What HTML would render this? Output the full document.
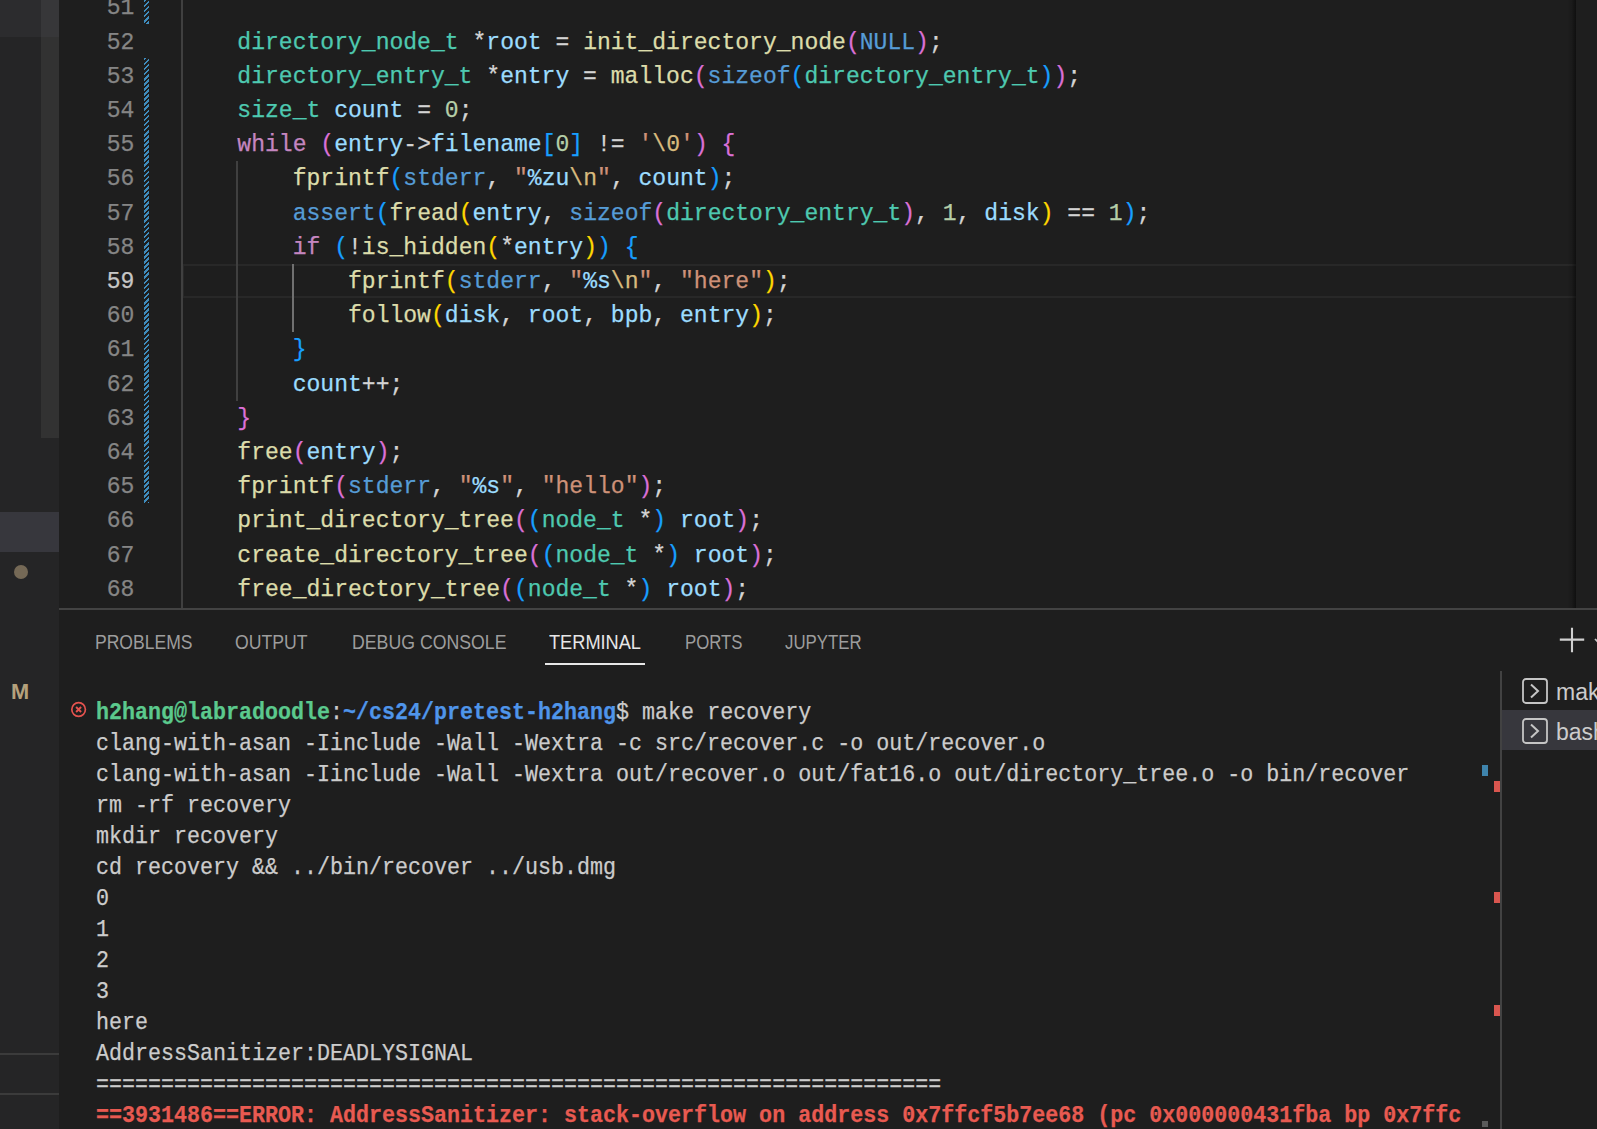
<!DOCTYPE html>
<html><head><meta charset="utf-8"><style>
*{margin:0;padding:0;box-sizing:border-box}
html,body{width:1597px;height:1129px;overflow:hidden;background:#1e1e1e}
body{position:relative;font-family:"Liberation Sans",sans-serif}
.abs{position:absolute}
#sb{position:absolute;left:0;top:0;width:59px;height:1129px;background:#252526;overflow:hidden}
#ed{position:absolute;left:59px;top:0;width:1538px;height:608px;background:#1e1e1e;overflow:hidden}
.cl,.ln{position:absolute;height:34.2px;line-height:34.2px;white-space:pre;font-family:"Liberation Mono",monospace;font-size:23.05px;padding-top:1px;-webkit-text-stroke:0.25px currentColor}
.cl{left:123px;color:#d4d4d4}
.ln{left:0;width:75.4px;text-align:right;color:#858585}
.ln.act{color:#c6c6c6}
.t{color:#4ec9b0} .v{color:#9cdcfe} .f{color:#dcdcaa} .k{color:#569cd6} .c{color:#c586c0}
.n{color:#b5cea8} .s{color:#ce9178} .e{color:#d7ba7d} .p{color:#9cdcfe} .o{color:#d4d4d4}
.b1{color:#ffd700} .b2{color:#da70d6} .b3{color:#179fff}
.hatch{position:absolute;left:85px;width:5px;background:repeating-linear-gradient(135deg,#3f8cbd 0 1.9px,#1e1e1e 1.9px 3.6px)}
#panel{position:absolute;left:59px;top:608px;width:1538px;height:521px;background:#1e1e1e;}
.tab{position:absolute;top:0;font-size:20.2px;line-height:24px;transform-origin:0 0;color:#9d9d9d;letter-spacing:0px;white-space:nowrap}
.tl{position:absolute;left:36.5px;height:31px;line-height:31px;white-space:pre;font-family:"Liberation Mono",monospace;font-size:24px;color:#cccccc;-webkit-text-stroke:0.25px currentColor;transform:scaleX(0.9028);transform-origin:0 0}
.tg{color:#5bc98d;font-weight:bold} .tb{color:#4f95ea;font-weight:bold} .tr{color:#e85a51;font-weight:bold}
</style></head><body>
<div id="sb">
  <div class="abs" style="left:0;top:0;width:59px;height:37px;background:#2c2c2e"></div>
  <div class="abs" style="left:41px;top:0;width:18px;height:438px;background:rgba(121,121,121,0.16)"></div>
  <div class="abs" style="left:0;top:512px;width:59px;height:40px;background:#37373d"></div>
  <div class="abs" style="left:14px;top:564.5px;width:14px;height:14px;border-radius:50%;background:#756956"></div>
  <div class="abs" style="left:11px;top:676.5px;font-size:21.8px;line-height:30px;color:#b5a17c;font-weight:bold">M</div>
  <div class="abs" style="left:0;top:1053px;width:59px;height:2px;background:#3b3b3b"></div>
  <div class="abs" style="left:0;top:1093px;width:59px;height:2px;background:#3b3b3b"></div>
</div>
<div id="ed">
  <div class="abs" style="left:123px;top:263.8px;width:1418px;height:33.8px;border:2px solid #282828;border-right:0"></div>
  <div class="abs" style="left:122px;top:0;width:2px;height:608px;background:#404040"></div>
  <div class="abs" style="left:177px;top:161.4px;width:2px;height:239.4px;background:#404040"></div>
  <div class="abs" style="left:233px;top:264.0px;width:2px;height:68.4px;background:#707070"></div>
  <div class="hatch" style="top:0;height:24px"></div>
  <div class="hatch" style="top:58px;height:445px"></div>
  <div class="ln" style="top:-9.60px">51</div><div class="ln" style="top:24.60px">52</div><div class="ln" style="top:58.80px">53</div><div class="ln" style="top:93.00px">54</div><div class="ln" style="top:127.20px">55</div><div class="ln" style="top:161.40px">56</div><div class="ln" style="top:195.60px">57</div><div class="ln" style="top:229.80px">58</div><div class="ln act" style="top:264.00px">59</div><div class="ln" style="top:298.20px">60</div><div class="ln" style="top:332.40px">61</div><div class="ln" style="top:366.60px">62</div><div class="ln" style="top:400.80px">63</div><div class="ln" style="top:435.00px">64</div><div class="ln" style="top:469.20px">65</div><div class="ln" style="top:503.40px">66</div><div class="ln" style="top:537.60px">67</div><div class="ln" style="top:571.80px">68</div>
  <div class="cl" style="top:-9.60px"></div><div class="cl" style="top:24.60px">    <span class="t">directory_node_t</span><span class="o"> *</span><span class="v">root</span><span class="o"> = </span><span class="f">init_directory_node</span><span class="b2">(</span><span class="k">NULL</span><span class="b2">)</span><span class="o">;</span></div><div class="cl" style="top:58.80px">    <span class="t">directory_entry_t</span><span class="o"> *</span><span class="v">entry</span><span class="o"> = </span><span class="f">malloc</span><span class="b2">(</span><span class="k">sizeof</span><span class="b3">(</span><span class="t">directory_entry_t</span><span class="b3">)</span><span class="b2">)</span><span class="o">;</span></div><div class="cl" style="top:93.00px">    <span class="t">size_t</span><span class="o"> </span><span class="v">count</span><span class="o"> = </span><span class="n">0</span><span class="o">;</span></div><div class="cl" style="top:127.20px">    <span class="c">while</span><span class="o"> </span><span class="b2">(</span><span class="v">entry</span><span class="o">-&gt;</span><span class="v">filename</span><span class="b3">[</span><span class="n">0</span><span class="b3">]</span><span class="o"> != </span><span class="s">&#x27;</span><span class="e">\0</span><span class="s">&#x27;</span><span class="b2">)</span><span class="o"> </span><span class="b2">{</span></div><div class="cl" style="top:161.40px">        <span class="f">fprintf</span><span class="b3">(</span><span class="k">stderr</span><span class="o">, </span><span class="s">&quot;</span><span class="p">%zu</span><span class="e">\n</span><span class="s">&quot;</span><span class="o">, </span><span class="v">count</span><span class="b3">)</span><span class="o">;</span></div><div class="cl" style="top:195.60px">        <span class="k">assert</span><span class="b3">(</span><span class="f">fread</span><span class="b1">(</span><span class="v">entry</span><span class="o">, </span><span class="k">sizeof</span><span class="b2">(</span><span class="t">directory_entry_t</span><span class="b2">)</span><span class="o">, </span><span class="n">1</span><span class="o">, </span><span class="v">disk</span><span class="b1">)</span><span class="o"> == </span><span class="n">1</span><span class="b3">)</span><span class="o">;</span></div><div class="cl" style="top:229.80px">        <span class="c">if</span><span class="o"> </span><span class="b3">(</span><span class="o">!</span><span class="f">is_hidden</span><span class="b1">(</span><span class="o">*</span><span class="v">entry</span><span class="b1">)</span><span class="b3">)</span><span class="o"> </span><span class="b3">{</span></div><div class="cl" style="top:264.00px">            <span class="f">fprintf</span><span class="b1">(</span><span class="k">stderr</span><span class="o">, </span><span class="s">&quot;</span><span class="p">%s</span><span class="e">\n</span><span class="s">&quot;</span><span class="o">, </span><span class="s">&quot;here&quot;</span><span class="b1">)</span><span class="o">;</span></div><div class="cl" style="top:298.20px">            <span class="f">follow</span><span class="b1">(</span><span class="v">disk</span><span class="o">, </span><span class="v">root</span><span class="o">, </span><span class="v">bpb</span><span class="o">, </span><span class="v">entry</span><span class="b1">)</span><span class="o">;</span></div><div class="cl" style="top:332.40px">        <span class="b3">}</span></div><div class="cl" style="top:366.60px">        <span class="v">count</span><span class="o">++;</span></div><div class="cl" style="top:400.80px">    <span class="b2">}</span></div><div class="cl" style="top:435.00px">    <span class="f">free</span><span class="b2">(</span><span class="v">entry</span><span class="b2">)</span><span class="o">;</span></div><div class="cl" style="top:469.20px">    <span class="f">fprintf</span><span class="b2">(</span><span class="k">stderr</span><span class="o">, </span><span class="s">&quot;</span><span class="p">%s</span><span class="s">&quot;</span><span class="o">, </span><span class="s">&quot;hello&quot;</span><span class="b2">)</span><span class="o">;</span></div><div class="cl" style="top:503.40px">    <span class="f">print_directory_tree</span><span class="b2">(</span><span class="b3">(</span><span class="t">node_t</span><span class="o"> *</span><span class="b3">)</span><span class="o"> </span><span class="v">root</span><span class="b2">)</span><span class="o">;</span></div><div class="cl" style="top:537.60px">    <span class="f">create_directory_tree</span><span class="b2">(</span><span class="b3">(</span><span class="t">node_t</span><span class="o"> *</span><span class="b3">)</span><span class="o"> </span><span class="v">root</span><span class="b2">)</span><span class="o">;</span></div><div class="cl" style="top:571.80px">    <span class="f">free_directory_tree</span><span class="b2">(</span><span class="b3">(</span><span class="t">node_t</span><span class="o"> *</span><span class="b3">)</span><span class="o"> </span><span class="v">root</span><span class="b2">)</span><span class="o">;</span></div>
  <div class="abs" style="left:1517px;top:0;width:30px;height:608px;background:#1e1e1e"></div>
  <div class="abs" style="left:1508px;top:0;width:9px;height:608px;background:linear-gradient(90deg,rgba(0,0,0,0),rgba(0,0,0,0.12) 50%,rgba(0,0,0,0.5))"></div>
</div>
<div id="panel">
  <div class="abs" style="left:0;top:0;width:1538px;height:2px;background:#434343"></div>
  <div class="tab" style="left:36px;top:22px;transform:scaleX(0.869)">PROBLEMS</div>
  <div class="tab" style="left:176px;top:22px;transform:scaleX(0.874)">OUTPUT</div>
  <div class="tab" style="left:293px;top:22px;transform:scaleX(0.877)">DEBUG CONSOLE</div>
  <div class="tab" style="left:490px;top:22px;color:#e7e7e7;transform:scaleX(0.901)">TERMINAL</div>
  <div class="abs" style="left:486px;top:55px;width:100px;height:2px;background:#e7e7e7"></div>
  <div class="tab" style="left:626px;top:22px;transform:scaleX(0.832)">PORTS</div>
  <div class="tab" style="left:726px;top:22px;transform:scaleX(0.833)">JUPYTER</div>
  <svg class="abs" style="left:1499.5px;top:19px" width="26" height="26" viewBox="0 0 26 26"><path d="M13 0.8V25.2M0.8 12.6H25.2" stroke="#d0d0d0" stroke-width="2.1" fill="none"/></svg>
  <svg class="abs" style="left:1535px;top:28.5px" width="12" height="10" viewBox="0 0 12 10"><path d="M1 2L6 7L11 2" stroke="#c5c5c5" stroke-width="1.7" fill="none"/></svg>
  <div class="abs" style="left:1441px;top:63px;width:2px;height:600px;background:#424242"></div>
  <div class="abs" style="left:1443px;top:102px;width:100px;height:40px;background:#37373d"></div>
  <svg class="abs" style="left:1463px;top:70px" width="26" height="26" viewBox="0 0 26 26"><rect x="1" y="1" width="24" height="24" rx="3" stroke="#c5c5c5" stroke-width="1.8" fill="none"/><path d="M9 6.5L16 13L9 19.5" stroke="#c5c5c5" stroke-width="2" fill="none"/></svg>
  <svg class="abs" style="left:1463px;top:109.5px" width="26" height="26" viewBox="0 0 26 26"><rect x="1" y="1" width="24" height="24" rx="3" stroke="#c5c5c5" stroke-width="1.8" fill="none"/><path d="M9 6.5L16 13L9 19.5" stroke="#c5c5c5" stroke-width="2" fill="none"/></svg>
  <div class="abs" style="left:1497px;top:67px;font-size:23px;line-height:34px;color:#cccccc;white-space:nowrap">make</div>
  <div class="abs" style="left:1497px;top:106.5px;font-size:23px;line-height:34px;color:#cccccc;white-space:nowrap">bash</div>
  <div class="abs" style="left:1423px;top:157px;width:6px;height:11px;background:#3f84ac"></div>
  <div class="abs" style="left:1435px;top:173px;width:6px;height:11px;background:#d9564f"></div>
  <div class="abs" style="left:1435px;top:284px;width:6px;height:11px;background:#d9564f"></div>
  <div class="abs" style="left:1435px;top:397px;width:6px;height:11px;background:#d9564f"></div>
  <div class="abs" style="left:1423px;top:513px;width:6px;height:6px;background:#5a5a5a"></div>
</div>
<div id="term" class="abs" style="left:59px;top:0;width:1441px;height:1129px;overflow:hidden">
  <div class="tl" style="top:697.0px"><span class="tg">h2hang@labradoodle</span>:<span class="tb">~/cs24/pretest-h2hang</span>$ make recovery</div><div class="tl" style="top:728.0px">clang-with-asan -Iinclude -Wall -Wextra -c src/recover.c -o out/recover.o</div><div class="tl" style="top:759.0px">clang-with-asan -Iinclude -Wall -Wextra out/recover.o out/fat16.o out/directory_tree.o -o bin/recover</div><div class="tl" style="top:790.0px">rm -rf recovery</div><div class="tl" style="top:821.0px">mkdir recovery</div><div class="tl" style="top:852.0px">cd recovery &amp;&amp; ../bin/recover ../usb.dmg</div><div class="tl" style="top:883.0px">0</div><div class="tl" style="top:914.0px">1</div><div class="tl" style="top:945.0px">2</div><div class="tl" style="top:976.0px">3</div><div class="tl" style="top:1007.0px">here</div><div class="tl" style="top:1038.0px">AddressSanitizer:DEADLYSIGNAL</div><div class="tl" style="top:1069.0px">=================================================================</div><div class="tl" style="top:1100.0px"><span class="tr">==3931486==ERROR: AddressSanitizer: stack-overflow on address 0x7ffcf5b7ee68 (pc 0x000000431fba bp 0x7ffc</span></div>
  <svg class="abs" style="left:11px;top:701px" width="17" height="17" viewBox="0 0 17 17"><circle cx="8.6" cy="8.5" r="6.8" stroke="#e5534f" stroke-width="1.7" fill="none"/><path d="M6.1 6.0L11.1 11.0M11.1 6.0L6.1 11.0" stroke="#e5534f" stroke-width="1.9"/></svg>
</div>
</body></html>
